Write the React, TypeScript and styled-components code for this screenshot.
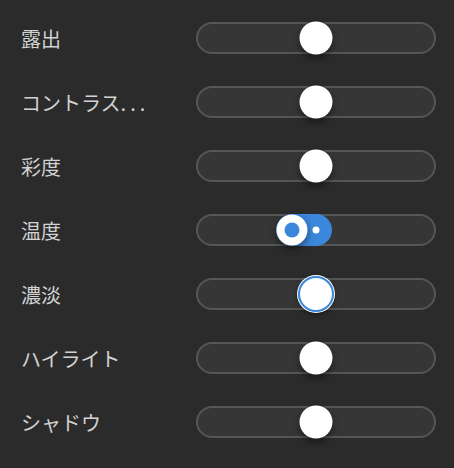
import { createGlobalStyle, styled } from "styled-components"

const Global = createGlobalStyle`
  html, body {
    margin: 0;
    padding: 0;
    background: #2b2b2b;
  }
`

type Row = { label: string; value: number; mode?: "normal" | "range" | "focus" }

const rows: Row[] = [
  { label: "露出", value: 50 },
  { label: "コントラス", value: 50 },
  { label: "彩度", value: 50 },
  { label: "温度", value: 40, mode: "range" },
  { label: "濃淡", value: 50, mode: "focus" },
  { label: "ハイライト", value: 50 },
  { label: "シャドウ", value: 50 },
]

const Sliders = () => {
  return (
    <Panel>
      <Global />
      {rows.map((r) => (
        <SliderRow key={r.label}>
          <Label>
            {r.label}
            {r.label === "コントラス" && <Dots>...</Dots>}
          </Label>
          <Track>
            {r.mode === "range" && (
              <>
                <Fill style={{ left: `calc(${r.value}% - 16px)`, width: `calc(${50 - r.value}% + 32px)` }} />
                <Origin />
              </>
            )}
            {r.mode === "range" ? (
              <RangeThumb style={{ left: `${r.value}%` }}>
                <Inner />
              </RangeThumb>
            ) : (
              <Thumb $focus={r.mode === "focus"} style={{ left: `${r.value}%` }} />
            )}
          </Track>
        </SliderRow>
      ))}
    </Panel>
  )
}

export default Sliders

const Panel = styled.div`
  width: 454px;
  height: 468px;
  box-sizing: border-box;
  padding: 6px 18px 14px 21px;
  display: flex;
  flex-direction: column;
  background: #2b2b2b;
  font-family: "Noto Sans CJK JP", "Noto Sans", sans-serif;
`

const SliderRow = styled.div`
  height: 64px;
  display: flex;
  align-items: center;
  justify-content: space-between;
`

const Label = styled.div`
  width: 160px;
  color: #d2d2d2;
  font-size: 20px;
  white-space: nowrap;
  overflow: hidden;
`

const Dots = styled.span`
  letter-spacing: 4px;
`

const Track = styled.div`
  position: relative;
  width: 240px;
  height: 32px;
  box-sizing: border-box;
  border: 2px solid #565656;
  border-radius: 16px;
  background: #363636;
`

const Fill = styled.div`
  position: absolute;
  top: -2px;
  bottom: -2px;
  border-radius: 16px;
  background: #3b87dc;
`

const Origin = styled.div`
  position: absolute;
  left: 50%;
  top: 50%;
  width: 7px;
  height: 7px;
  border-radius: 50%;
  background: #fff;
  transform: translate(-50%, -50%);
`

const Thumb = styled.div<{ $focus?: boolean }>`
  position: absolute;
  top: 50%;
  width: ${(p) => (p.$focus ? "36px" : "33px")};
  height: ${(p) => (p.$focus ? "36px" : "33px")};
  box-sizing: border-box;
  border-radius: 50%;
  background: #fff;
  border: ${(p) => (p.$focus ? "2px solid #3b87dc" : "none")};
  box-shadow: ${(p) =>
    p.$focus ? "0 0 0 1px #fff, 0 2px 6px rgba(0,0,0,0.5)" : "0 3px 7px rgba(0,0,0,0.5)"};
  transform: translate(-50%, -50%);
`

const RangeThumb = styled.div`
  position: absolute;
  top: 50%;
  width: 31px;
  height: 31px;
  border-radius: 50%;
  background: #fff;
  display: flex;
  align-items: center;
  justify-content: center;
  box-shadow: 0 3px 7px rgba(0, 0, 0, 0.5);
  transform: translate(-50%, -50%);
`

const Inner = styled.div`
  width: 15px;
  height: 15px;
  border-radius: 50%;
  background: #3b87dc;
`
